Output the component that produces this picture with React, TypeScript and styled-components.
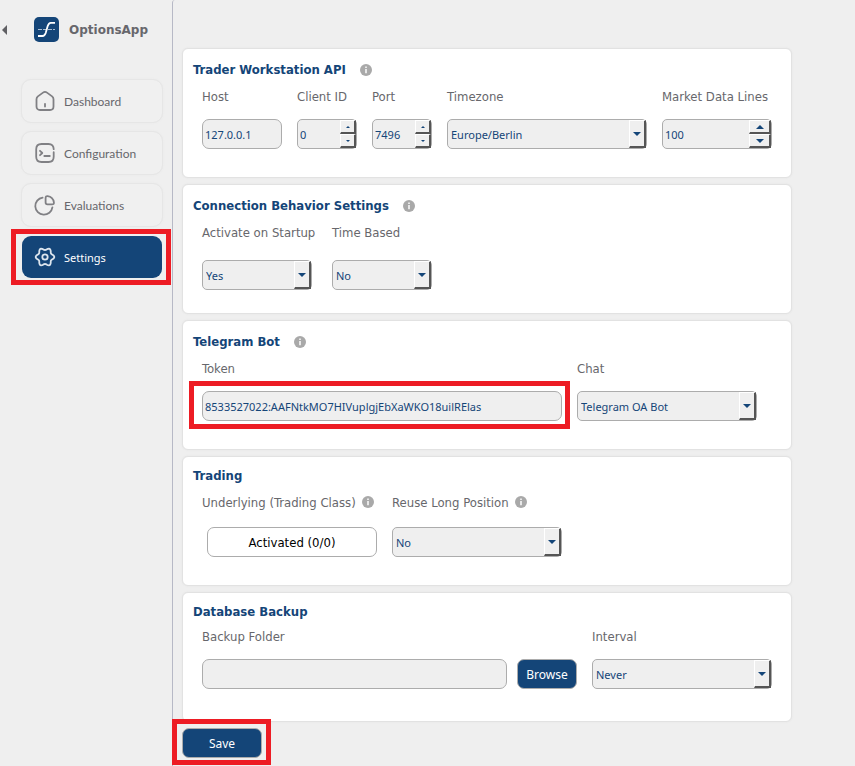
import React, { useState } from "react";
import styled, { createGlobalStyle, css } from "styled-components";

const navy = "#144578";
const panel = "#efefef";
const grey = "#67676c";
const line = "#acacac";
const red = "#ed1c24";
const condensed = '"DejaVu Sans Condensed", "DejaVu Sans", sans-serif';
const humanist = '"Noto Sans", sans-serif';

const GlobalStyle = createGlobalStyle`
  * { box-sizing: border-box; }
  body { margin: 0; background: ${panel}; font-family: ${condensed}; }
  button, input, select { font: inherit; margin: 0; }
`;

const Page = styled.div`
  display: flex;
  min-height: 100vh;
`;

const Sidebar = styled.aside`
  flex: 0 0 172px;
  padding: 17px 9px 0 21px;
`;

const Brand = styled.div`
  display: flex;
  align-items: center;
  height: 25px;
  gap: 10px;
  margin: 0 0 37px -21px;
  color: ${grey};
  font: bold 12px "DejaVu Sans", sans-serif;
`;

const Collapse = styled.button`
  display: flex;
  width: 24px;
  padding: 0 0 0 2px;
  border: 0;
  background: none;
`;

const Nav = styled.nav`
  display: flex;
  flex-direction: column;
  gap: 8px;
`;

const marked = css`
  position: relative;
  &::after {
    content: "";
    position: absolute;
    border: 5px solid ${red};
    pointer-events: none;
  }
`;

const MarkedNav = styled.div`
  ${marked}
  &::after { inset: -6px -8px -6px -10px; }
`;

const MarkedToken = styled.div`
  ${marked}
  &::after { inset: -10px -8px -8px -13px; }
`;

const MarkedSave = styled.div`
  ${marked}
  align-self: flex-start;
  &::after { inset: -9px -9px -7px -10px; }
`;

const NavLink = styled.a<{ $active?: boolean }>`
  display: flex;
  align-items: center;
  gap: 8px;
  height: 44px;
  padding-left: 12px;
  border: 1px solid ${(p) => (p.$active ? "transparent" : "#e6e6e6")};
  border-radius: 10px;
  background: ${(p) => (p.$active ? navy : "#f0f0f0")};
  background-clip: padding-box;
  box-shadow: ${(p) => (p.$active ? "none" : "0 0 2px #e9e9e9")};
  color: ${(p) => (p.$active ? "#fff" : grey)};
  font: ${(p) => (p.$active ? `11px ${humanist}` : `12px Lato, sans-serif`)};
  text-decoration: none;
`;

const Main = styled.main`
  flex: 1;
  display: flex;
  flex-direction: column;
  gap: 6px;
  min-width: 0;
  padding: 48px 63px 8px 9px;
  border-left: 1px solid #b7b9c6;
  border-top-left-radius: 3px;
`;

const Card = styled.section`
  min-height: 130px;
  padding: 11px 10px 20px;
  border: 1px solid #e2e2e2;
  border-radius: 6px;
  background: #fff;
  box-shadow: 0 0 2px #e2e2e2;
`;

const TitleRow = styled.div`
  display: flex;
  align-items: center;
  gap: 14px;
  margin-bottom: 6px;
`;

const Title = styled.h2`
  margin: 0;
  color: ${navy};
  font-size: 13px;
  font-weight: bold;
  line-height: 16px;
`;

const TitleWithInfo = styled(Title)`
  line-height: 20px;
`;

const Fields = styled.div<{ $gap?: number }>`
  display: flex;
  gap: ${(p) => p.$gap ?? 15}px;
  padding-left: 9px;
`;

const FieldBox = styled.div<{ $w: number; $drop?: number }>`
  display: flex;
  flex-direction: column;
  gap: ${(p) => p.$drop ?? 13}px;
  width: ${(p) => p.$w}px;
`;

const LabelRow = styled.div<{ $tall?: boolean }>`
  display: flex;
  align-items: center;
  gap: 6px;
  height: ${(p) => (p.$tall ? 24 : 20)}px;
  white-space: nowrap;
`;

const Label = styled.label`
  color: ${grey};
  font-size: 13px;
`;

const controlBox = css`
  width: 100%;
  height: 30px;
  border: 1px solid ${line};
  background: ${panel};
  color: ${navy};
  font: 11px ${humanist};
`;

const TextInput = styled.input`
  ${controlBox}
  display: block;
  min-width: 0;
  padding: 0 2px;
  border-radius: 7px;
`;

const Combo = styled.div`
  ${controlBox}
  display: grid;
  grid-template-columns: 1fr 17px;
  border-radius: 5px;
`;

const Picker = styled.select`
  grid-area: 1 / 1 / 2 / 3;
  min-width: 0;
  padding: 0 20px 0 3px;
  border: 0;
  background: none;
  color: inherit;
  appearance: none;
`;

const bevel = css`
  border-style: solid;
  border-width: 1px 2px 2px 1px;
  border-color: #fff #555 #555 #fff;
  background: ${panel};
`;

const DropFace = styled.span`
  ${bevel}
  grid-area: 1 / 2;
  display: flex;
  align-items: center;
  justify-content: center;
  pointer-events: none;
`;

const Spin = styled.div<{ $btn: number }>`
  ${controlBox}
  display: grid;
  grid-template-columns: 1fr ${(p) => p.$btn}px;
  border-radius: 5px;
`;

const SpinInput = styled.input`
  min-width: 0;
  padding: 0 2px;
  border: 0;
  background: none;
  color: inherit;
`;

const Steps = styled.div`
  display: grid;
  grid-template-rows: 1fr 1fr;
`;

const Step = styled.button`
  ${bevel}
  display: flex;
  align-items: center;
  justify-content: center;
  padding: 0;
`;

const PlainButton = styled.button`
  height: 30px;
  margin-left: 5px;
  border: 1px solid ${line};
  border-radius: 7px;
  background: #fff;
  color: #000;
  font-size: 13px;
`;

const BlueButton = styled.button<{ $w: number }>`
  display: block;
  flex: none;
  width: ${(p) => p.$w}px;
  height: 30px;
  padding: 0;
  border: 1px solid ${line};
  border-radius: 7px;
  background: ${navy};
  color: #fff;
  font: 12px ${humanist};
`;

const FolderRow = styled.div`
  display: flex;
  gap: 10px;
`;

const Info = () => (
  <svg width="12" height="12" viewBox="0 0 12 12" role="img" aria-label="Info">
    <circle cx="6" cy="6" r="6" fill="#a9a9a9" />
    <path d="M5 2.6h2v1.5H5zM5 5h2v4.2H5z" fill="#e8e8e8" />
  </svg>
);

const Tri = ({ up, small }: { up?: boolean; small?: boolean }) => (
  <svg width={small ? 4 : 8} height={small ? 2 : 4} viewBox="0 0 8 4">
    <path d={up ? "M0 4 4 0l4 4z" : "M0 0h8L4 4z"} fill={navy} />
  </svg>
);

// Six-lobed outline of the settings gear.
const gearPoints = Array.from({ length: 72 }, (_, i) => {
  const a = (i * Math.PI) / 36;
  const r = 8.1 + 1.2 * Math.cos(6 * a);
  return `${(10 + r * Math.cos(a)).toFixed(2)},${(10 + r * Math.sin(a)).toFixed(2)}`;
}).join(" ");

const icons = {
  home: (
    <path d="M1.5 8.2c0-1.2.5-2 1.4-2.8L8 1.6c1.2-.9 2.8-.9 4 0l5.1 3.8c.9.8 1.4 1.6 1.4 2.8v7.3c0 2-1.2 3.5-3.5 3.5H5c-2.3 0-3.5-1.500-3.500-3.500zM10 12.800v2.700" />
  ),
  terminal: (
    <path d="M18.7 6.2C18.7 2.8 17 1 13.5 1h-7C3 1 1.2 2.8 1.2 6.3v7.4C1.2 17.2 3 19 6.5 19h7c3.5 0 5.2-1.8 5.2-5.3V9.200M5 7.800l2.300 2.200L5 12.200M9.300 13h5.500" />
  ),
  pie: (
    <path d="M7.6 2.6A8.6 8.6 0 1 0 17.4 12.4M12.6 1.2c-1.3-.2-2 .4-2 1.7v4.6c0 1.3.6 1.9 1.9 1.9h4.7c1.3 0 1.9-.7 1.7-2-.5-3.200-3-5.700-6.300-6.200z" />
  ),
  gear: (
    <>
      <circle cx="10" cy="10" r="2.7" />
      <polygon points={gearPoints} />
    </>
  ),
};

const NavIcon = ({ name, color = "#808084" }: { name: keyof typeof icons; color?: string }) => (
  <svg width="22" height="22" viewBox="-1 -1 22 22" fill="none" stroke={color} strokeWidth="1.8" strokeLinecap="round" strokeLinejoin="round">
    {icons[name]}
  </svg>
);

const Logo = () => (
  <svg width="25" height="25" viewBox="0 0 25 25" fill="none">
    <rect width="25" height="25" rx="5" fill={navy} />
    <path d="M4 12.5h17" stroke="#a9bdd2" strokeDasharray="4 1" />
    <path d="M4 19h4.500c1.800 0 2.500-1 3.200-3l2-7c.7-2.200 1.300-3.200 3-3.200H21" stroke="#fff" strokeWidth="1.800" />
  </svg>
);

type FieldProps = {
  id: string;
  label: string;
  w: number;
  drop?: number;
  info?: boolean;
  tall?: boolean;
  children: React.ReactNode;
};

const Field = ({ id, label, w, drop, info, tall, children }: FieldProps) => (
  <FieldBox $w={w} $drop={drop}>
    <LabelRow $tall={tall}>
      <Label htmlFor={id}>{label}</Label>
      {info && <Info />}
    </LabelRow>
    {children}
  </FieldBox>
);

const Select = ({ id, options }: { id: string; options: string[] }) => (
  <Combo>
    <Picker id={id}>
      {options.map((o) => (
        <option key={o}>{o}</option>
      ))}
    </Picker>
    <DropFace>
      <Tri />
    </DropFace>
  </Combo>
);

const Spinner = ({ id, initial, wide }: { id: string; initial: number; wide?: boolean }) => {
  const [value, setValue] = useState(initial);
  return (
    <Spin $btn={wide ? 22 : 16}>
      <SpinInput id={id} inputMode="numeric" value={value} onChange={(e) => setValue(Number(e.target.value) || 0)} />
      <Steps>
        <Step type="button" aria-label="Increase" onClick={() => setValue(value + 1)}>
          <Tri up small={!wide} />
        </Step>
        <Step type="button" aria-label="Decrease" onClick={() => setValue(Math.max(0, value - 1))}>
          <Tri small={!wide} />
        </Step>
      </Steps>
    </Spin>
  );
};

export default function App() {
  return (
    <Page>
      <GlobalStyle />
      <Sidebar>
        <Brand>
          <Collapse type="button" aria-label="Collapse sidebar">
            <svg width="5" height="10" viewBox="0 0 5 10">
              <path d="M5 0v10L0 5z" fill="#606064" />
            </svg>
          </Collapse>
          <Logo />
          <span>OptionsApp</span>
        </Brand>
        <Nav>
          <NavLink href="#dashboard"><NavIcon name="home" />Dashboard</NavLink>
          <NavLink href="#configuration"><NavIcon name="terminal" />Configuration</NavLink>
          <NavLink href="#evaluations"><NavIcon name="pie" />Evaluations</NavLink>
          <MarkedNav>
            <NavLink href="#settings" $active><NavIcon name="gear" color="#dce5ee" />Settings</NavLink>
          </MarkedNav>
        </Nav>
      </Sidebar>
      <Main>
        <Card>
          <TitleRow><TitleWithInfo>Trader Workstation API</TitleWithInfo><Info /></TitleRow>
          <Fields>
            <Field id="host" label="Host" w={80}><TextInput id="host" defaultValue="127.0.0.1" /></Field>
            <Field id="client" label="Client ID" w={60}><Spinner id="client" initial={0} /></Field>
            <Field id="port" label="Port" w={60}><Spinner id="port" initial={7496} /></Field>
            <Field id="zone" label="Timezone" w={200}><Select id="zone" options={["Europe/Berlin"]} /></Field>
            <Field id="lines" label="Market Data Lines" w={110}><Spinner id="lines" initial={100} wide /></Field>
          </Fields>
        </Card>
        <Card>
          <TitleRow><TitleWithInfo>Connection Behavior Settings</TitleWithInfo><Info /></TitleRow>
          <Fields $gap={20}>
            <Field id="startup" label="Activate on Startup" w={110} drop={18}><Select id="startup" options={["Yes", "No"]} /></Field>
            <Field id="timed" label="Time Based" w={100} drop={18}><Select id="timed" options={["No", "Yes"]} /></Field>
          </Fields>
        </Card>
        <Card>
          <TitleRow><TitleWithInfo>Telegram Bot</TitleWithInfo><Info /></TitleRow>
          <Fields>
            <Field id="token" label="Token" w={360}>
              <MarkedToken><TextInput id="token" defaultValue="8533527022:AAFNtkMO7HIVuplgjEbXaWKO18uilRElas" /></MarkedToken>
            </Field>
            <Field id="chat" label="Chat" w={180}><Select id="chat" options={["Telegram OA Bot"]} /></Field>
          </Fields>
        </Card>
        <Card>
          <TitleRow><Title>Trading</Title></TitleRow>
          <Fields>
            <Field id="underlying" label="Underlying (Trading Class)" w={175} info tall>
              <PlainButton id="underlying" type="button">Activated (0/0)</PlainButton>
            </Field>
            <Field id="reuse" label="Reuse Long Position" w={170} info tall><Select id="reuse" options={["No", "Yes"]} /></Field>
          </Fields>
        </Card>
        <Card>
          <TitleRow><Title>Database Backup</Title></TitleRow>
          <Fields>
            <Field id="folder" label="Backup Folder" w={375}>
              <FolderRow>
                <TextInput id="folder" />
                <BlueButton type="button" $w={60}>Browse</BlueButton>
              </FolderRow>
            </Field>
            <Field id="interval" label="Interval" w={180}><Select id="interval" options={["Never", "Daily", "Weekly"]} /></Field>
          </Fields>
        </Card>
        <MarkedSave><BlueButton type="button" $w={80}>Save</BlueButton></MarkedSave>
      </Main>
    </Page>
  );
}
